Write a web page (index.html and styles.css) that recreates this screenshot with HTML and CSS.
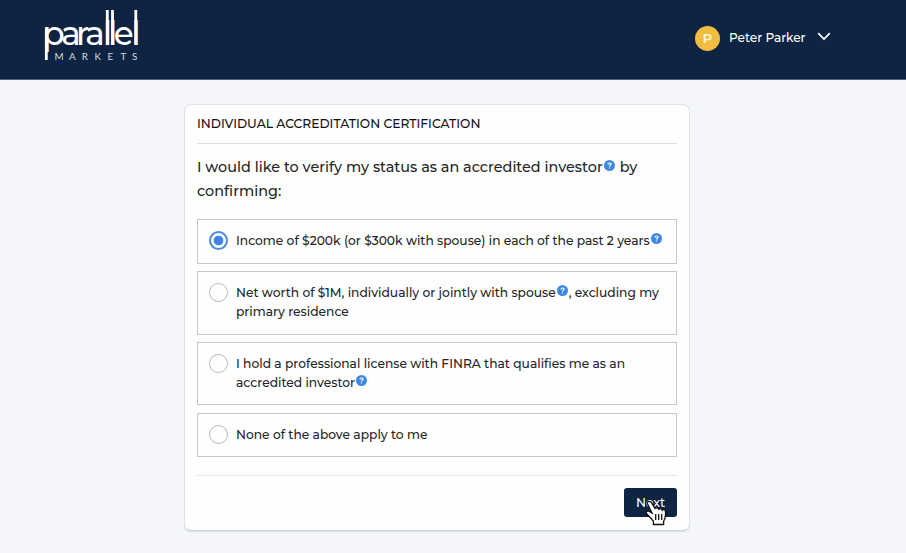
FILE: index.html
```
<!DOCTYPE html>
<html lang="en">
<head>
<meta charset="utf-8">
<title>Parallel Markets</title>
<link rel="stylesheet" href="styles.css">
</head>
<body>
	<svg class="sprite" width="0" height="0">
		<symbol id="help" viewBox="0 0 11 11">
			<circle cx="5.5" cy="5.5" r="5.5" fill="#3f87e5"/>
			<path d="M4 4.4C4 2.5 7 2.6 7 4.2C7 5.3 5.5 5.2 5.5 6.4M5.5 7.4V8.4" fill="none" stroke="#fff" stroke-width="1.2"/>
		</symbol>
	</svg>

	<header class="header">
		<svg class="logo" width="96" height="54" viewBox="0 0 96 54">
			<text class="logo-name" x="-1.6 17.2 32 41.2 59 64.2 69.8 87.5" y="36.7">parallel</text>
			<path class="logo-stems" d="M2.3 19.5V52M63.3 2V36.7M68.5 2V36.7M91.8 2V36.7"/>
			<text class="logo-sub" x="10.4 25 37.8 50.6 63.6 76.6 88" y="51.8">MARKETS</text>
		</svg>
		<div class="user">
			<span class="avatar">P</span>
			<span class="user-name">Peter Parker</span>
			<svg class="chevron" width="14" height="9" viewBox="0 0 14 9"><path d="M1.2 1.2L7 7L12.8 1.2"/></svg>
		</div>
	</header>

	<main class="card">
		<h1 class="title">INDIVIDUAL ACCREDITATION CERTIFICATION</h1>
		<p class="question">
			I would like to verify my status as an accredited investor<svg class="help"><use href="#help"/></svg>
			by<br>
			confirming:
		</p>

		<div class="options">
			<label class="option">
				<span class="radio checked"></span>
				<span class="label">Income of $200k (or $300k with spouse) in each of the past 2 years<svg class="help"><use href="#help"/></svg></span>
			</label>
			<label class="option">
				<span class="radio"></span>
				<span class="label">Net worth of $1M, individually or jointly with spouse<svg class="help"><use href="#help"/></svg>, excluding my<br>primary residence</span>
			</label>
			<label class="option">
				<span class="radio"></span>
				<span class="label">I hold a professional license with FINRA that qualifies me as an<br>accredited investor<svg class="help"><use href="#help"/></svg></span>
			</label>
			<label class="option">
				<span class="radio"></span>
				<span class="label">None of the above apply to me</span>
			</label>
		</div>

		<div class="actions">
			<button class="next">Next</button>
			<svg class="cursor" width="22" height="26" viewBox="0 0 22 26">
				<path d="M4.2 1.3C2.6 1.3 2 2.9 2.7 4.3L7 13L4.3 11.4C2.5 10.3.3 12 1.7 13.7L8.4 21V24.5H18.6V21.4C20.6 18.6 20.8 16 20.5 11.6C20.4 9.6 18 9 17.3 10.3C16.8 8.4 14.6 8 13.8 9.3C13 7.6 11 7.4 10 8.4L6.5 2.6C5.9 1.7 5.2 1.3 4.2 1.3Z"/>
				<path class="cursor-lines" d="M10.7 14V20M13.7 14V20M16.7 14V20"/>
			</svg>
		</div>
	</main>
</body>
</html>
```
FILE: styles.css
```
* {
	box-sizing: border-box;
}

body {
	margin: 0;
	height: 553px;
	overflow: hidden;
	background: #f4f6fb;
	color: #252525;
	font-family: Montserrat, Inter, sans-serif;
}

.sprite {
	display: block;
	height: 0;
}

.header {
	display: flex;
	justify-content: space-between;
	align-items: flex-start;
	height: 80px;
	padding: 8px 75px 0 44px;
	background: #0e2442;
	border-bottom: 1px solid #52647d;
}

.logo {
	overflow: visible;
}

.logo text {
	fill: #fff;
}

.logo-name {
	font-size: 32.5px;
	font-weight: 500;
}

.logo .logo-sub {
	font-family: Lato, sans-serif;
	font-size: 9.8px;
	fill: #d5dce6;
}

.logo-stems {
	stroke: #fff;
	stroke-width: 2.8;
}

.user {
	display: flex;
	align-items: center;
	padding-top: 18px;
	color: #fff;
	font-size: 12.1px;
	font-weight: 500;
}

.avatar {
	display: flex;
	align-items: center;
	justify-content: center;
	width: 25px;
	height: 25px;
	margin-right: 9px;
	padding-bottom: 1px;
	border-radius: 50%;
	background: #f1bc42;
	color: #fff8d8;
	font-size: 13.5px;
	font-weight: 600;
}

.user-name {
	width: 88px;
	padding-bottom: 2px;
	white-space: nowrap;
}

.chevron {
	margin-top: -5px;
	fill: none;
	stroke: #fff;
	stroke-width: 1.7;
}

.card {
	width: 506px;
	height: 427px;
	margin: 24px 0 0 184px;
	padding: 0 12px;
	background: #fefefe;
	border: 1px solid #dfe2ea;
	border-bottom-color: #ced2da;
	border-radius: 7px;
	box-shadow: 0 1px 1px #dcdfe6;
}

.title {
	height: 39px;
	margin: 0;
	border-bottom: 1px solid #dedfe1;
	color: #111;
	font-size: 12.3px;
	font-weight: 500;
	line-height: 37px;
	white-space: nowrap;
}

.question {
	margin: 11px 0 16px;
	font-size: 14.4px;
	font-weight: 500;
	line-height: 24px;
	white-space: nowrap;
}

.help {
	width: 11px;
	height: 11px;
	margin: 0 1px;
	vertical-align: 1.5px;
}

.options {
	display: grid;
	grid-template-rows: 44.6px 63.6px 63px 44px;
	row-gap: 7.6px;
}

.option {
	display: flex;
	padding: 11px;
	border: 1px solid #c6c6c6;
}

.radio {
	flex: none;
	width: 19px;
	height: 19px;
	margin-right: 8px;
	border: 1px solid #b9b9b9;
	border-radius: 50%;
}

.checked {
	border: 2px solid #4a8be0;
	background: radial-gradient(circle, #3f87e5 4.5px, #fff 5.2px);
}

.label {
	padding-top: 1px;
	font-size: 12.27px;
	font-weight: 500;
	line-height: 18.7px;
	white-space: nowrap;
}

.actions {
	position: relative;
	display: flex;
	justify-content: flex-end;
	margin-top: 18px;
	padding-top: 12px;
	border-top: 1px solid #e3e4e6;
}

.next {
	width: 53px;
	height: 29px;
	padding: 0;
	border: 0;
	border-radius: 3px;
	background: #0e2442;
	color: #fff;
	font: 500 12.3px Montserrat, Inter, sans-serif;
}

/* pointer over the button */
.cursor {
	position: absolute;
	right: 10px;
	top: 24px;
	fill: #fff;
	stroke: #111;
	stroke-width: 1.3;
}
```
